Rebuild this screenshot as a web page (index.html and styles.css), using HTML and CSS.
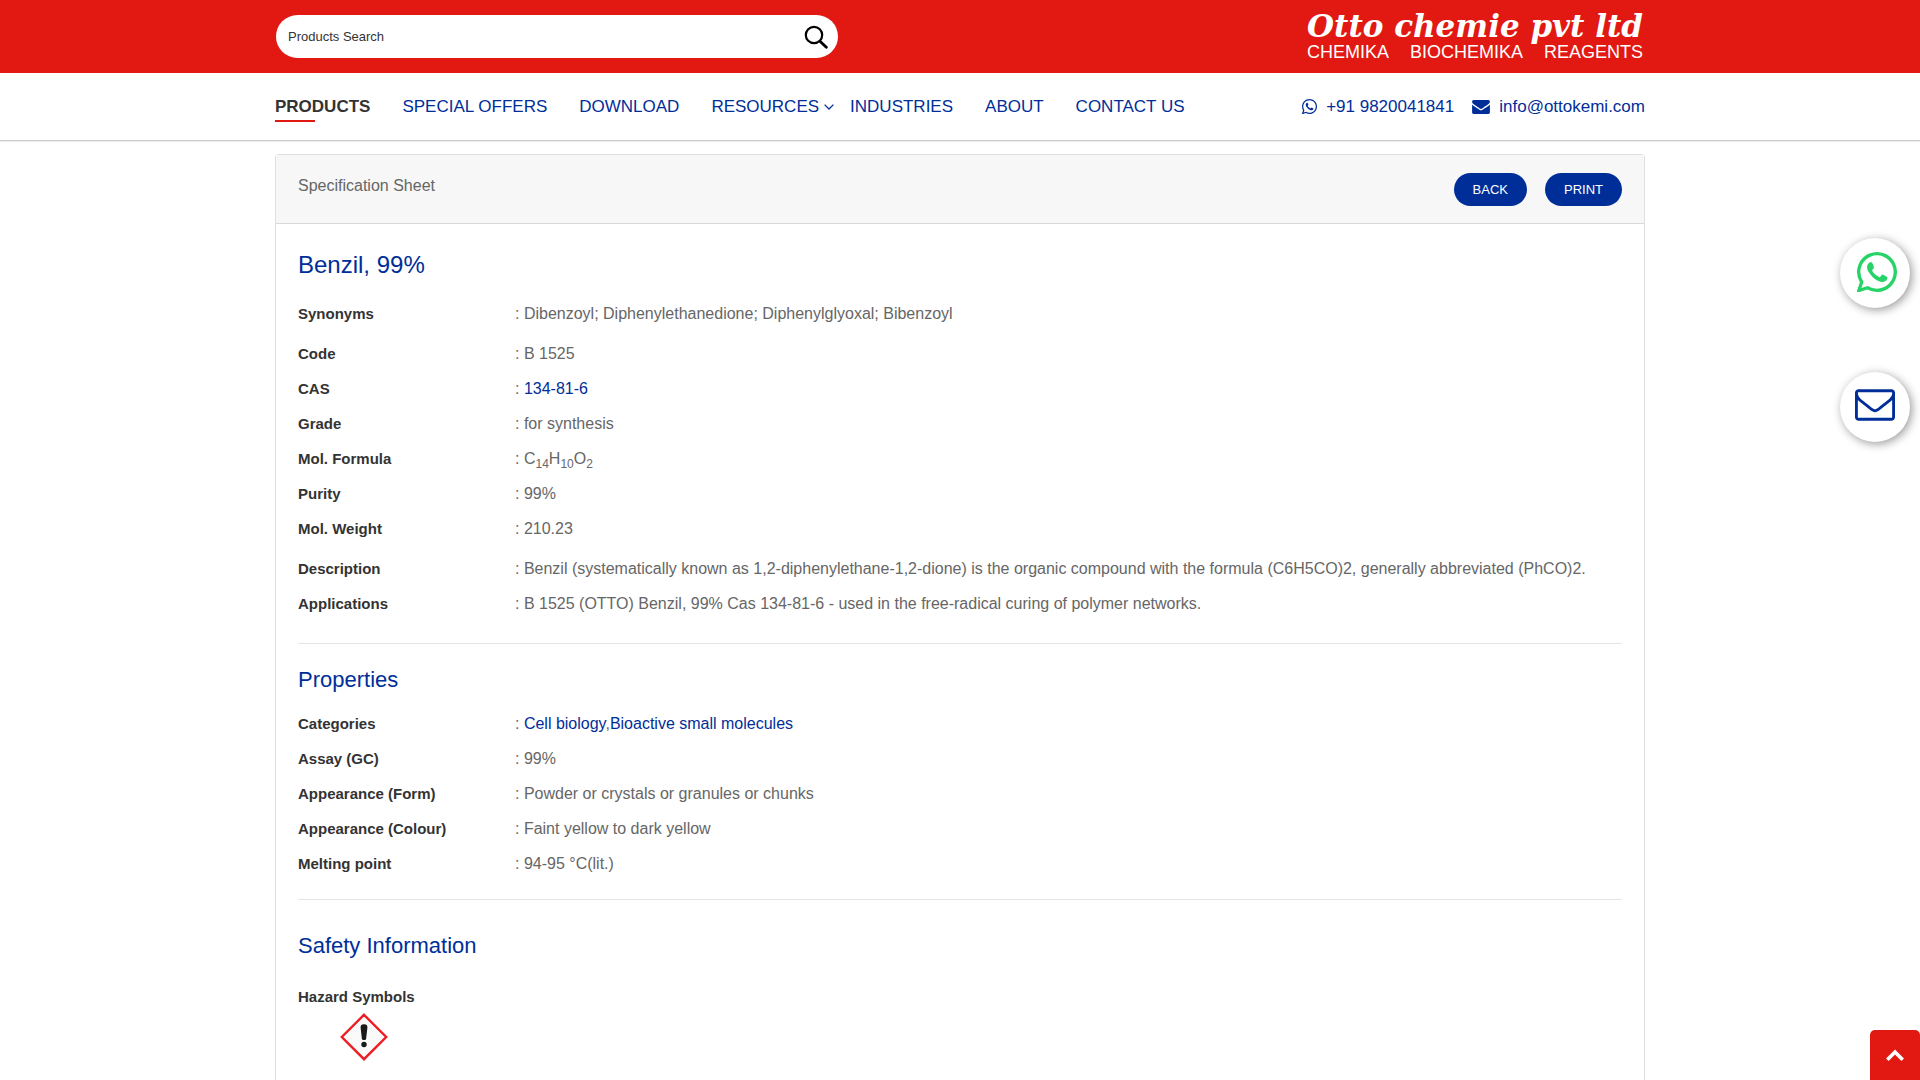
FILE: index.html
```html
<!DOCTYPE html>
<html lang="en">
<head>
<meta charset="utf-8">
<meta name="viewport" content="width=device-width, initial-scale=1">
<title>Benzil, 99% - Specification Sheet</title>
<link rel="stylesheet" href="styles.css">
</head>
<body>
<svg class="sprite" aria-hidden="true">
  <symbol id="whatsapp" viewBox="28 122 1508 1508">
    <path d="M985 974q13 0 97.500 44t89.500 53q2 5 2 15 0 33-17 76-16 39-71 65.500t-102 26.500q-57 0-190-62-98-45-170-118t-148-185q-72-107-71-194v-8q3-91 74-158 24-22 52-22 6 0 18 1.500t19 1.500q19 0 26.500 6.500t15.500 27.500q8 20 33 88t25 75q0 21-34.500 57.500t-34.500 46.500q0 7 5 15 34 73 102 137 56 53 151 101 12 7 22 7 15 0 54-48.500t52-48.500zm-203 530q127 0 243.500-50t200.500-134 134-200.500 50-243.500-50-243.500-134-200.500-200.500-134-243.500-50-243.500 50-200.500 134-134 200.500-50 243.500q0 203 120 368l-79 233 242-77q158 104 345 104zm0-1382q153 0 292.500 60t240.500 161 161 240.500 60 292.500-60 292.500-161 240.500-240.500 161-292.500 60q-195 0-365-94l-417 134 136-405q-108-178-108-389 0-153 60-292.500t161-240.500 240.500-161 292.500-60z"/>
  </symbol>
  <symbol id="envelope" viewBox="0 256 1792 1408">
    <path d="M1792 710v794q0 66-47 113t-113 47h-1472q-66 0-113-47t-47-113v-794q44 49 101 87 362 246 497 345 57 42 92.500 65.500t94.500 48 110 24.500h2q51 0 110-24.500t94.500-48 92.500-65.500q170-123 498-345 57-39 100-87zm0-294q0 79-49 151t-122 123q-376 261-468 325-10 7-42.500 31t-54 38.500-52 32.500-57.500 27-50 9h-2q-23 0-50-9t-57.500-27-52-32.500-54-38.500-42.500-31q-91-64-262-182.500t-205-142.500q-62-42-117-115.500t-55-136.500q0-78 41.500-130t118.500-52h1472q65 0 112.500 47t47.500 113z"/>
  </symbol>
  <symbol id="envelope-outline" viewBox="0 256 1792 1408">
    <path d="M1664 1504v-768q-32 36-69 66-268 206-426 338-51 43-83 67t-86.500 48.500-102.500 24.500h-2q-48 0-102.500-24.500t-86.500-48.500-83-67q-158-132-426-338-37-30-69-66v768q0 13 9.500 22.500t22.500 9.500h1472q13 0 22.500-9.500t9.500-22.500zm0-1051v-24.500l-.5-13-3-12.500-5.500-9-9-7.500-14-2.500h-1472q-13 0-22.500 9.500t-9.500 22.500q0 168 147 284 193 152 401 317 6 5 35 29.500t46 37.500 44.500 31.500 50.500 27.500 43 9h2q20 0 43-9t50.500-27.500 44.500-31.500 46-37.500 35-29.500q208-165 401-317 54-43 100.500-115.500t46.500-131.500zm128-37v1088q0 66-47 113t-113 47h-1472q-66 0-113-47t-47-113v-1088q0-66 47-113t113-47h1472q66 0 113 47t47 113z"/>
  </symbol>
</svg>

<header>
  <div class="topbar">
    <div class="container topbar-row">
      <form class="search" role="search">
        <input class="search-input" type="text" placeholder="Products Search" aria-label="Products Search">
        <button class="search-button" type="button" aria-label="Search">
          <svg class="stroke" width="24" height="24" viewBox="0 0 24 24" stroke="#000" stroke-width="2.200" stroke-linecap="round"><circle cx="10" cy="10" r="8.200"/><path d="M16 16.200L22.300 22.300" stroke-width="2.800"/></svg>
        </button>
      </form>
      <a class="logo" href="#">
        <span class="logo-name">Otto chemie pvt ltd</span>
        <span class="logo-tagline"><span>CHEMIKA</span><span>BIOCHEMIKA</span><span>REAGENTS</span></span>
      </a>
    </div>
  </div>
  <div class="navbar">
    <div class="container navbar-row">
      <nav class="menu">
        <a class="menu-link active" href="#">PRODUCTS</a>
        <a class="menu-link" href="#">SPECIAL OFFERS</a>
        <a class="menu-link" href="#">DOWNLOAD</a>
        <a class="menu-link has-submenu" href="#">RESOURCES
          <svg class="stroke" width="10" height="6" viewBox="0 0 10 6" stroke="currentColor" stroke-width="1.300"><path d="M.6.600L5 5L9.400.600"/></svg>
        </a>
        <a class="menu-link" href="#">INDUSTRIES</a>
        <a class="menu-link" href="#">ABOUT</a>
        <a class="menu-link" href="#">CONTACT US</a>
      </nav>
      <div class="contacts">
        <a class="contact" href="tel:+919820041841"><svg width="15" height="15"><use href="#whatsapp"/></svg>+91 9820041841</a>
        <a class="contact" href="mailto:info@ottokemi.com"><svg width="18" height="14"><use href="#envelope"/></svg>info@ottokemi.com</a>
      </div>
    </div>
  </div>
</header>

<main class="container">
  <article class="card">
    <div class="card-header">
      <div class="card-heading">Specification Sheet</div>
      <div class="actions">
        <button class="pill" type="button">BACK</button>
        <button class="pill" type="button">PRINT</button>
      </div>
    </div>
    <div class="card-body">
      <section class="section">
        <h1 class="title">Benzil, 99%</h1>
        <table class="specs">
          <tbody>
            <tr><th scope="row">Synonyms</th><td>: Dibenzoyl; Diphenylethanedione; Diphenylglyoxal; Bibenzoyl</td></tr>
          </tbody>
        </table>
        <table class="specs">
          <tbody>
            <tr><th scope="row">Code</th><td>: B 1525</td></tr>
            <tr><th scope="row">CAS</th><td>: <a href="#">134-81-6</a></td></tr>
            <tr><th scope="row">Grade</th><td>: for synthesis</td></tr>
            <tr><th scope="row">Mol. Formula</th><td>: C<sub>14</sub>H<sub>10</sub>O<sub>2</sub></td></tr>
            <tr><th scope="row">Purity</th><td>: 99%</td></tr>
            <tr><th scope="row">Mol. Weight</th><td>: 210.23</td></tr>
          </tbody>
        </table>
        <table class="specs">
          <tbody>
            <tr><th scope="row">Description</th><td>: Benzil (systematically known as 1,2-diphenylethane-1,2-dione) is the organic compound with the formula (C6H5CO)2, generally abbreviated (PhCO)2.</td></tr>
            <tr><th scope="row">Applications</th><td>: B 1525 (OTTO) Benzil, 99% Cas 134-81-6 - used in the free-radical curing of polymer networks.</td></tr>
          </tbody>
        </table>
      </section>
      <section class="section properties">
        <h2 class="subtitle">Properties</h2>
        <table class="specs">
          <tbody>
            <tr><th scope="row">Categories</th><td>: <a href="#">Cell biology</a>,<a href="#">Bioactive small molecules</a></td></tr>
            <tr><th scope="row">Assay (GC)</th><td>: 99%</td></tr>
            <tr><th scope="row">Appearance (Form)</th><td>: Powder or crystals or granules or chunks</td></tr>
            <tr><th scope="row">Appearance (Colour)</th><td>: Faint yellow to dark yellow</td></tr>
            <tr><th scope="row">Melting point</th><td>: 94-95 °C(lit.)</td></tr>
          </tbody>
        </table>
      </section>
      <section class="safety">
        <h2 class="subtitle">Safety Information</h2>
        <h3 class="label">Hazard Symbols</h3>
        <svg class="hazard" width="48" height="48" viewBox="0 0 48 48" role="img" aria-label="Exclamation mark hazard">
          <path d="M24 1.800L46.200 24L24 46.200L1.800 24Z" fill="#fafafa" stroke="#ee1c23" stroke-width="2.400"/>
          <path d="M24 11.200c2.500 0 3.600 1 3.400 3.600l-1.300 11.200c-.2 1.300-4 1.300-4.200 0l-1.300-11.200c-.2-2.600.9-3.600 3.400-3.600z" fill="#1a1a1a"/>
          <circle cx="24" cy="31.500" r="2.700" fill="#1a1a1a"/>
        </svg>
      </section>
    </div>
  </article>
</main>

<aside class="floating">
  <a class="bubble bubble-whatsapp" href="#" aria-label="WhatsApp"><svg width="40" height="40"><use href="#whatsapp"/></svg></a>
  <a class="bubble bubble-mail" href="#" aria-label="Email"><svg width="40" height="32"><use href="#envelope-outline"/></svg></a>
</aside>
<button class="to-top" type="button" aria-label="Back to top">
  <svg class="stroke" width="18" height="12" viewBox="0 0 18 12" stroke="#fff" stroke-width="3.600"><path d="M1.300 10.700L9 3L16.700 10.700"/></svg>
</button>
</body>
</html>
```

FILE: styles.css
```css
* {
  box-sizing: border-box;
}

body {
  display: flex;
  flex-direction: column;
  min-height: 100vh;
  margin: 0;
  background: #fff;
  color: #666;
  font: 16px/24px "Liberation Sans", Arial, sans-serif;
}

a {
  color: #002e99;
  text-decoration: none;
}

svg {
  display: block;
  fill: currentColor;
}

.stroke {
  fill: none;
}

.sprite {
  position: absolute;
  width: 0;
  height: 0;
}

.container {
  width: 100%;
  max-width: 1370px;
  margin: 0 auto;
}

/* Red bar with search and logo */
.topbar {
  background: #e21912;
}

.topbar-row {
  display: flex;
  align-items: center;
  justify-content: space-between;
  min-height: 73px;
}

.search {
  display: flex;
  align-items: center;
  width: 41%;
  height: 43px;
  margin-left: 1px;
  padding: 0 10px 0 12px;
  border-radius: 22px;
  background: #fff;
}

.search-input {
  flex: 1;
  padding: 0;
  border: 0;
  outline: 0;
  background: none;
  color: #333;
  font: inherit;
  font-size: 13px;
}

.search-input::placeholder {
  color: #333;
  opacity: 1;
}

.search-button {
  padding: 0;
  border: 0;
  background: none;
}

.logo {
  display: flex;
  flex-direction: column;
  margin-right: 2px;
  color: #fff;
}

.logo-name {
  font: italic bold 31px/30px "DejaVu Serif", serif;
}

.logo-tagline {
  display: flex;
  justify-content: space-between;
  font-size: 18px;
  line-height: 22px;
}

/* Menu and contact row */
.navbar {
  border-bottom: 1px solid #ccc;
  box-shadow: 0 1px 1px #eee;
  font-size: 17px;
}

.navbar-row {
  display: flex;
  align-items: center;
  justify-content: space-between;
  min-height: 67px;
}

.menu {
  display: flex;
  gap: 32px;
}

.menu-link {
  position: relative;
}

.active {
  color: #333;
  font-weight: bold;
}

.active::after {
  content: "";
  position: absolute;
  left: 0;
  bottom: -3px;
  width: 40px;
  height: 2px;
  background: #e21912;
}

.has-submenu {
  display: flex;
  align-items: center;
  gap: 5px;
  margin-right: -16px;
}

.contacts {
  display: flex;
  gap: 18px;
}

.contact {
  display: flex;
  align-items: center;
  gap: 9px;
}

/* Specification card */
main.container {
  display: flex;
  flex: 1;
  margin-top: 13px;
}

.card {
  flex: 1;
  border: 1px solid #dfdfdf;
  border-bottom: 0;
  border-radius: 4px 4px 0 0;
}

.card-header {
  display: flex;
  justify-content: space-between;
  padding: 18px 22px 17px;
  border-bottom: 1px solid #d8d8d8;
  background: #f7f7f7;
}

.card-heading {
  line-height: 26px;
}

.actions {
  display: flex;
  gap: 18px;
}

.pill {
  height: 33px;
  padding: 0 19px;
  border: 0;
  border-radius: 17px;
  background: #002e99;
  color: #fff;
  font: inherit;
  font-size: 13px;
}

.card-body {
  padding: 25px 22px 0;
}

.section {
  border-bottom: 1px solid #e5e5e5;
  padding-bottom: 22px;
}

.properties {
  padding: 21px 0 18px;
}

.title {
  margin: 0 0 15px;
  color: #002e99;
  font-size: 24px;
  font-weight: normal;
  line-height: 32px;
}

.subtitle {
  margin: 0 0 11px;
  color: #002e99;
  font-size: 22px;
  font-weight: normal;
  line-height: 30px;
}

.specs {
  width: 100%;
  border-collapse: collapse;
}

.specs + .specs {
  margin-top: 5px;
}

.specs th,
.specs td {
  height: 35px;
  padding: 0;
  vertical-align: middle;
}

.specs th {
  width: 217px;
  text-align: left;
}

.specs th,
.label {
  color: #333;
  font-size: 15px;
  font-weight: bold;
}

.specs sub {
  font-size: 12px;
  line-height: 0;
}

.safety {
  padding-top: 31px;
}

.label {
  margin: 24px 0 4px;
}

.hazard {
  margin-left: 42px;
}

/* Floating controls */
.floating {
  position: fixed;
  top: 238px;
  right: 10px;
  display: flex;
  flex-direction: column;
  gap: 64px;
}

.bubble {
  display: flex;
  align-items: center;
  justify-content: center;
  width: 70px;
  height: 70px;
  border-radius: 50%;
  background: #fff;
  box-shadow: 2px 2px 10px #999;
}

.bubble-whatsapp {
  padding: 0 0 2px 3px;
  color: #25d366;
}

.bubble-mail {
  padding-bottom: 4px;
}

.to-top {
  position: fixed;
  right: 0;
  bottom: 0;
  display: flex;
  align-items: center;
  justify-content: center;
  width: 50px;
  height: 50px;
  border: 0;
  border-radius: 5px 5px 0 0;
  background: #e21912;
}
```
